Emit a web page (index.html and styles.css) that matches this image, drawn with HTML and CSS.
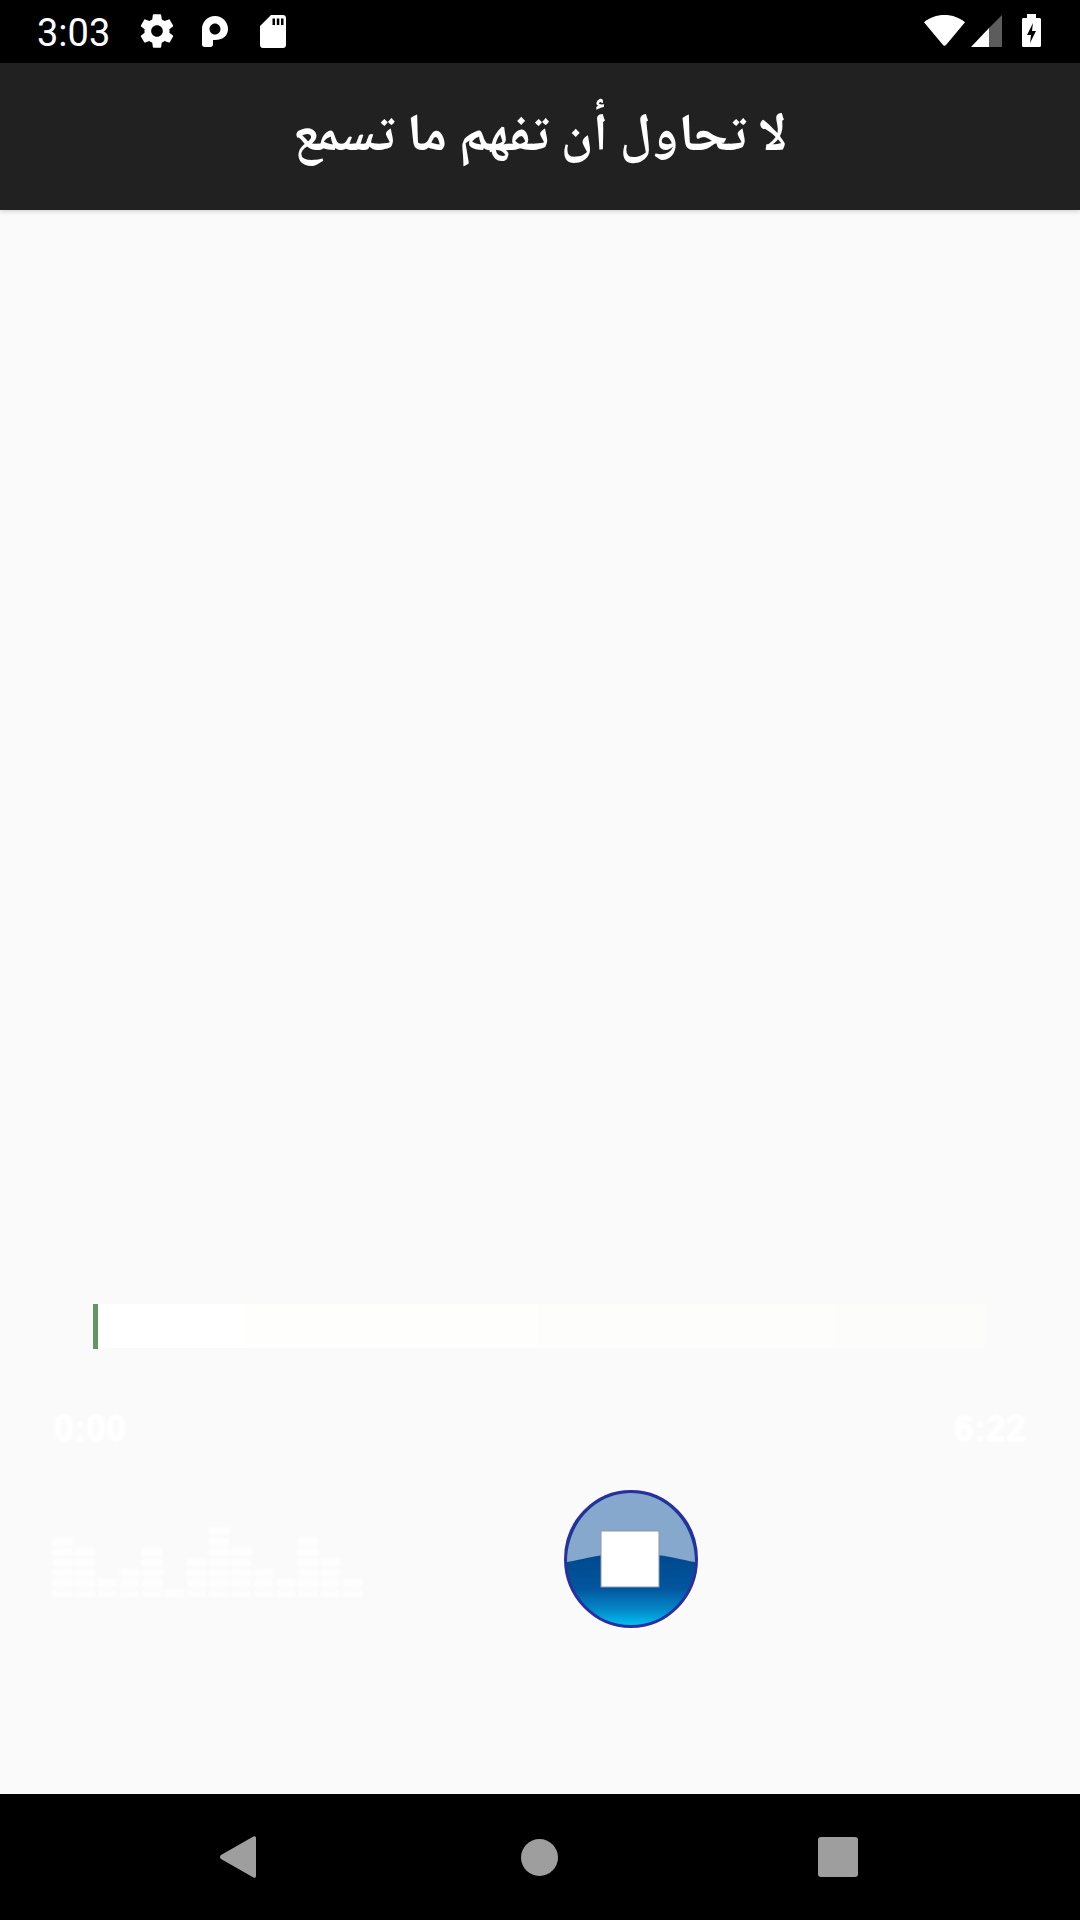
FILE: index.html
```html
<!DOCTYPE html>
<html lang="ar">
<head>
<meta charset="utf-8">
<title>لا تحاول أن تفهم ما تسمع</title>
<link rel="stylesheet" href="styles.css">
</head>
<body>
<div class="screen">
  <header class="status">
    <span class="clock">3:03</span>
    <svg class="ic-gear" viewBox="0 0 24 24"><path fill="#fff" fill-rule="evenodd" d="M19.43 12.98c.04-.32.07-.64.07-.98s-.03-.66-.07-.98l2.11-1.65c.19-.15.24-.42.12-.64l-2-3.46c-.12-.22-.39-.3-.61-.22l-2.49 1c-.52-.4-1.08-.73-1.69-.98l-.38-2.65C14.46 2.18 14.25 2 14 2h-4c-.25 0-.46.18-.49.42l-.38 2.65c-.61.25-1.17.59-1.69.98l-2.49-1c-.23-.09-.49 0-.61.22l-2 3.46c-.13.22-.07.49.12.64l2.11 1.65c-.04.32-.07.65-.07.98s.03.66.07.98l-2.11 1.65c-.19.15-.24.42-.12.64l2 3.46c.12.22.39.3.61.22l2.49-1c.52.4 1.08.73 1.69.98l.38 2.65c.03.24.24.42.49.42h4c.25 0 .46-.18.49-.42l.38-2.65c.61-.25 1.17-.59 1.69-.98l2.49 1c.23.09.49 0 .61-.22l2-3.46c.12-.22.07-.49-.12-.64l-2.11-1.65zM12 15.5c-1.93 0-3.5-1.57-3.5-3.5s1.57-3.5 3.5-3.5 3.5 1.57 3.5 3.5-1.57 3.5-3.5 3.5z"/></svg>
    <svg class="ic-p" viewBox="0 0 26 31"><path fill="#fff" fill-rule="evenodd" d="M0 13C0 5.800 5.800 0 13 0s13 5.800 13 13-5.800 11-13 11h-2v4.500c0 1.500-1 2.500-2.500 2.500h-6C1 31 0 30 0 28.500zM13 7.500c-3 0-5.500 2.500-5.500 5.500s2.500 5.500 5.500 5.500 5.500-2.500 5.500-5.500-2.500-5.500-5.500-5.500z"/></svg>
    <svg class="ic-sd" viewBox="0 0 26 33"><path fill="#fff" fill-rule="evenodd" d="M11 0h12c1.700 0 3 1.300 3 3v27c0 1.700-1.300 3-3 3H3c-1.700 0-3-1.300-3-3V11zM12.500 3.500v6.500h2.500V3.500zM16.800 3.500v6.500h2.500V3.500zM21 3.500v6.500h2.500V3.500z"/></svg>
    <span class="status-spacer"></span>
    <svg class="ic-wifi" viewBox="0 0 41 31"><path fill="#fff" d="M20.500 0C12.500 0 5.500 2.700 0 7.200L19 30c.8 1 2.200 1 3 0L41 7.200C35.500 2.700 28.500 0 20.500 0z"/></svg>
    <svg class="ic-signal" viewBox="0 0 31 32"><path fill="#5c5c5c" d="M31 0v32H18V13z"/><path fill="#fff" d="M18 13v19H0z"/></svg>
    <svg class="ic-batt" viewBox="0 0 19 33"><path fill="#fff" fill-rule="evenodd" d="M5 0h9v4h3.500c.9 0 1.500.6 1.500 1.500v26c0 .9-.6 1.500-1.500 1.500h-16C.600 33 0 32.400 0 31.500v-26C0 4.600.6 4 1.500 4H5zM11 9l-6 12h4l-1 8 6-12h-4z"/></svg>
  </header>

  <div class="appbar">
    <h1 class="title" dir="rtl">لا تحاول أن تفهم ما تسمع</h1>
  </div>

  <main class="content">
    <div class="seek">
      <div class="seek-progress"></div>
      <div class="seek-seg seg-a"></div>
      <div class="seek-seg seg-b"></div>
      <div class="seek-seg seg-c"></div>
      <div class="seek-seg seg-d"></div>
    </div>
    <div class="times">
      <span class="time">0:00</span>
      <span class="time">6:22</span>
    </div>
    <div class="controls">
      <div class="eq">
        <span class="eq-col h6"></span>
        <span class="eq-col h5"></span>
        <span class="eq-col h2"></span>
        <span class="eq-col h3"></span>
        <span class="eq-col h5"></span>
        <span class="eq-col h1"></span>
        <span class="eq-col h4"></span>
        <span class="eq-col h7"></span>
        <span class="eq-col h5"></span>
        <span class="eq-col h3"></span>
        <span class="eq-col h2"></span>
        <span class="eq-col h6"></span>
        <span class="eq-col h4"></span>
        <span class="eq-col h2"></span>
      </div>
      <svg class="stop" viewBox="0 0 134 138">
        <defs>
          <linearGradient id="lower" x1="0" y1="0" x2="0" y2="1">
            <stop offset="0.5" stop-color="#014a90"/>
            <stop offset="0.72" stop-color="#02569e"/>
            <stop offset="0.88" stop-color="#0389c9"/>
            <stop offset="1" stop-color="#00c4f6"/>
          </linearGradient>
        </defs>
        <ellipse cx="67" cy="69" rx="65.500" ry="67.500" fill="url(#lower)" stroke="#2a2f9e" stroke-width="3"/>
        <path fill="#86a8cc" d="M3 72C3 34 31 3 67 3s64 31 64 69C118 70 102 65 90 65H44C32 65 16 70 3 72z"/>
        <rect x="37" y="41" width="58" height="56" fill="#fff" stroke="#8b97a5" stroke-width="1"/>
      </svg>
    </div>
  </main>

  <footer class="nav">
    <svg class="nav-back" viewBox="0 0 36 42"><path fill="#9e9e9e" d="M36 2v38c0 1.500-1.300 2.300-2.600 1.400L1 23c-1.300-.8-1.300-3.200 0-4L33.400.6C34.700-.3 36 .5 36 2z"/></svg>
    <svg class="nav-home" viewBox="0 0 37 37"><circle cx="18.500" cy="18.500" r="18.500" fill="#9e9e9e"/></svg>
    <svg class="nav-recent" viewBox="0 0 40 40"><rect width="40" height="40" rx="3" fill="#9e9e9e"/></svg>
  </footer>
</div>
</body>
</html>
```

FILE: styles.css
```css
html, body {
  margin: 0;
  padding: 0;
}

.screen {
  width: 1080px;
  height: 1920px;
  display: flex;
  flex-direction: column;
  overflow: hidden;
  background: #fafafa;
  font-family: Roboto, sans-serif;
}

.status {
  height: 63px;
  flex: none;
  background: #000;
  display: flex;
  align-items: center;
  padding: 0 39px 0 37px;
  box-sizing: border-box;
}

.clock {
  color: #fff;
  font-size: 38px;
  width: 100px;
  line-height: 63px;
  margin-top: 3px;
}

.ic-gear { width: 40px; height: 40px; margin-top: -1px; }
.ic-p { width: 26px; height: 31px; margin-left: 25px; }
.ic-sd { width: 26px; height: 33px; margin-left: 32px; margin-top: -1px; }
.status-spacer { flex: 1; }
.ic-wifi { width: 41px; height: 31px; margin-top: -2px; }
.ic-signal { width: 31px; height: 32px; margin-left: 6px; margin-top: -1px; }
.ic-batt { width: 19px; height: 33px; margin-left: 20px; margin-top: -2px; }

.appbar {
  height: 147px;
  flex: none;
  background: #212121;
  display: flex;
  align-items: center;
  justify-content: center;
  box-shadow: 0 2px 4px rgba(0, 0, 0, 0.14);
  position: relative;
}

.title {
  margin: 4px 0 0;
  color: #fff;
  font-family: "Noto Naskh Arabic", "Noto Sans Arabic", "DejaVu Sans", serif;
  font-weight: bold;
  font-size: 53px;
  line-height: 80px;
}

.content {
  flex: 1;
  padding-top: 1094px;
  box-sizing: border-box;
}

.seek {
  margin-left: 93px;
  width: 892px;
  height: 45px;
  display: flex;
}

.seek-progress { width: 5px; background: #649664; }
.seek-seg { height: 44px; }
.seg-a { width: 147px; background: #ffffff; }
.seg-b { width: 293px; background: #fefefd; }
.seg-c { width: 298px; background: #fdfdfc; }
.seg-d { width: 149px; background: #fcfcfb; }

.times {
  display: flex;
  justify-content: space-between;
  padding: 0 54px 0 54px;
  margin-top: 55px;
}

.time {
  color: #fff;
  font-family: "Liberation Sans", sans-serif;
  font-weight: bold;
  font-size: 36px;
  line-height: 50px;
  text-shadow: 0 0 4px #fff;
}

.controls {
  display: flex;
  align-items: flex-end;
  padding-left: 53px;
  margin-top: 36px;
}

.eq {
  width: 511px;
  height: 70px;
  margin-bottom: 31px;
  display: flex;
  align-items: flex-end;
  gap: 2.800px;
  filter: blur(0.8px);
  opacity: 0.85;
}

.eq-col {
  width: 19.500px;
  background: repeating-linear-gradient(to top, #ffffff 0 7.500px, transparent 7.500px 10.300px);
}

.h1 { height: 8px; }
.h2 { height: 18px; }
.h3 { height: 29px; }
.h4 { height: 39px; }
.h5 { height: 49px; }
.h6 { height: 60px; }
.h7 { height: 70px; }

.stop {
  width: 134px;
  height: 138px;
  flex: none;
  filter: blur(0.5px);
}

.nav {
  height: 126px;
  flex: none;
  background: #000;
  display: flex;
  align-items: center;
  padding-left: 220px;
}

.nav-back { width: 36px; height: 42px; }
.nav-home { width: 37px; height: 37px; margin-left: 265px; }
.nav-recent { width: 40px; height: 40px; margin-left: 260px; }
```
